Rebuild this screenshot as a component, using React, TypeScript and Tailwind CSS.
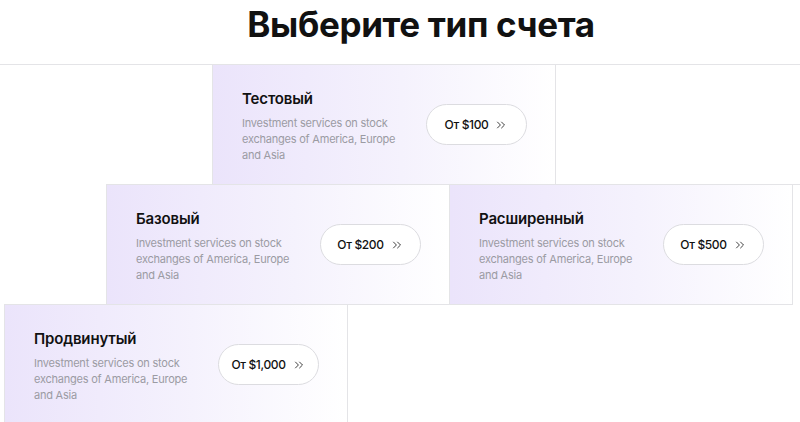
import { ChevronsRight } from "lucide-react";

const desc = "Investment services on stock exchanges of America, Europe and Asia";

function Card({ title, price, className = "" }: { title: string; price: string; className?: string }) {
  return (
    <div className={`flex h-[121px] w-[344px] shrink-0 items-center justify-between border border-[#e4e4e7] bg-linear-to-r from-[#ebe4fb] via-[#f5f2fd] via-55% to-white pl-[29px] pr-[28px] ${className}`}>
      <div className="pt-[2px]">
        <h3 className="text-[15px] font-semibold leading-[20px] tracking-[-0.01em] text-[#111]">{title}</h3>
        <p className="mt-[6px] w-[168px] text-[11px] leading-[16px] tracking-[-0.02em] text-[#9b9ba3]">{desc}</p>
      </div>
      <button className="flex h-[41px] w-[101px] items-center justify-center gap-[6px] rounded-full border border-[#dcdce0] bg-white text-[12px] font-medium tracking-[-0.03em] text-[#111]">
        <span>От {price}</span>
        <ChevronsRight size={14} strokeWidth={1.6} className="text-[#333]" />
      </button>
    </div>
  );
}

export default function App() {
  return (
    <div className="h-[422px] w-[800px] overflow-hidden bg-white font-['Inter',sans-serif]">
      <div className="flex h-[64px] items-center justify-center pb-[15px] pl-[42px]">
        <h1 className="text-[35px] font-bold leading-none tracking-[-0.01em] text-[#111]">Выберите тип счета</h1>
      </div>
      <div className="border-t border-[#e4e4e7]">
        <div className="flex -mt-px pl-[212px]">
          <Card title="Тестовый" price="$100" />
          <div className="flex-1 border-b border-[#e4e4e7]" />
        </div>
        <div className="flex -mt-px pl-[106px]">
          <Card title="Базовый" price="$200" />
          <Card title="Расширенный" price="$500" className="-ml-px" />
        </div>
        <div className="flex -mt-px pl-[4px]">
          <Card title="Продвинутый" price="$1,000" />
        </div>
      </div>
    </div>
  );
}
